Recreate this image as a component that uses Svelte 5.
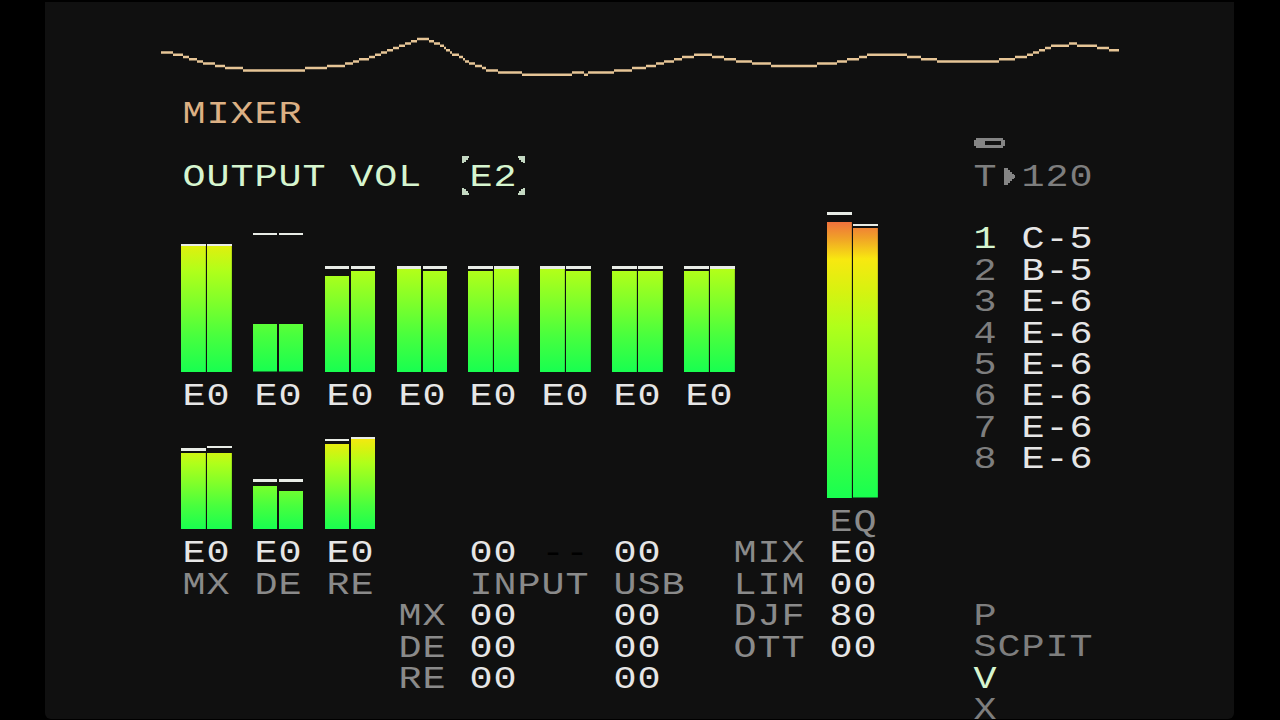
<!-- Mixer page of the tracker: scope line, track/return/master meters and the status column. -->
<script lang="ts">
    type Meter = {
        levels: [number, number];
        peaks: [number, number];
        value: string;
        name?: string;
    };

    // [end x, vertical step] for every horizontal run of the scope line
    const scopeStart = 161;
    const scopeRuns = [
        [173, 6], [183, 7], [189, 8], [197, 9], [203, 10], [215, 11],
        [225, 12], [243, 13], [305, 14], [327, 13], [345, 12], [353, 11],
        [359, 10], [369, 9], [375, 8], [381, 7], [387, 6], [393, 5],
        [399, 4], [405, 3], [411, 2], [417, 1], [429, 0], [434, 1],
        [440, 2], [444, 3], [446, 4], [450, 5], [452, 6], [459, 7],
        [463, 8], [465, 9], [469, 10], [475, 11], [482, 12], [486, 13],
        [498, 14], [522, 15], [572, 16], [584, 15], [588, 16], [614, 15],
        [632, 14], [646, 13], [656, 12], [664, 11], [674, 10], [682, 9],
        [694, 8], [712, 7], [724, 8], [736, 9], [752, 10], [771, 11],
        [817, 12], [837, 11], [847, 10], [859, 9], [867, 8], [907, 7],
        [921, 8], [937, 9], [999, 10], [1015, 9], [1027, 8], [1033, 7],
        [1039, 6], [1045, 5], [1051, 4], [1069, 3], [1077, 2], [1097, 3],
        [1109, 4], [1119, 5],
    ];

    const scopePath = scopeRuns
        .map(([end, step], i) => {
            const from = i === 0 ? scopeStart : scopeRuns[i - 1][0];
            return `M${from - scopeStart} ${(2 + step * 2.24).toFixed(1)}H${end - scopeStart}`;
        })
        .join("");

    const tracks: Meter[] = [
        { levels: [126, 126], peaks: [125.5, 125.5], value: "E0" },
        { levels: [47.5, 47.5], peaks: [136.5, 136.5], value: "E0" },
        { levels: [96, 101], peaks: [103, 103], value: "E0" },
        { levels: [104, 101], peaks: [103, 103], value: "E0" },
        { levels: [101, 104], peaks: [103, 103], value: "E0" },
        { levels: [104, 101], peaks: [103, 103], value: "E0" },
        { levels: [101, 101], peaks: [103, 103], value: "E0" },
        { levels: [101, 104], peaks: [103, 103], value: "E0" },
    ];

    const returns: Meter[] = [
        { levels: [76.5, 76.5], peaks: [78.5, 81], value: "E0", name: "MX" },
        { levels: [43, 38.5], peaks: [47.5, 47.5], value: "E0", name: "DE" },
        { levels: [85.5, 91], peaks: [88, 90], value: "E0", name: "RE" },
    ];

    const master: Meter = { levels: [276, 269.5], peaks: [283, 271.5], value: "EQ" };

    const sends = ["MX", "DE", "RE"];

    const masterParams = [
        ["MIX", "E0"],
        ["LIM", "00"],
        ["DJF", "80"],
        ["OTT", "00"],
    ];

    const notes = ["C-5", "B-5", "E-6", "E-6", "E-6", "E-6", "E-6", "E-6"];
    const activeTrack = 0;
</script>

{#snippet bars(meter: Meter)}
    <div class="bars">
        {#each meter.levels as level, i}
            <div class="channel">
                <div class="level" style="height: {level}px"></div>
                <div class="peak" style="bottom: {meter.peaks[i]}px"></div>
            </div>
        {/each}
    </div>
{/snippet}

<div class="screen">
    <svg class="scope" width="958" height="42" viewBox="0 0 958 42">
        <path d={scopePath} fill="none" stroke="#e6c596" stroke-width="2.5" />
    </svg>

    <div class="page">
        <main class="mixer">
            <h1><span class="t">MIXER</span></h1>

            <div class="output">
                <span class="t">OUTPUT VOL</span>
                <div class="cursor">
                    <span class="t">E2</span>
                    <svg width="63" height="39" viewBox="0 0 63 39">
                        <path
                            d="M0 0H7V2H6V4H4V6H2V7H0ZM63 0H56V2H57V4H59V6H61V7H63ZM0 39H7V37H6V35H4V33H2V32H0ZM63 39H56V37H57V35H59V33H61V32H63Z"
                            fill="#c4d8c2"
                        />
                    </svg>
                </div>
            </div>

            <div class="desk">
                <div class="strips">
                    <div class="meters tracks">
                        {#each tracks as track}
                            <div class="strip">
                                {@render bars(track)}
                                <span class="t">{track.value}</span>
                            </div>
                        {/each}
                    </div>

                    <div class="lower">
                        <div class="meters returns">
                            {#each returns as ret}
                                <div class="strip">
                                    {@render bars(ret)}
                                    <span class="t">{ret.value}</span>
                                    <span class="t dim">{ret.name}</span>
                                </div>
                            {/each}
                        </div>

                        <div class="inputs">
                            <span></span>
                            <span class="t">00</span>
                            <span class="t off">--</span>
                            <span class="t">00</span>
                            <span></span>
                            <span class="t dim wide">INPUT</span>
                            <span class="t dim">USB</span>
                            {#each sends as send}
                                <span class="t dim">{send}</span>
                                <span class="t wide">00</span>
                                <span class="t">00</span>
                            {/each}
                        </div>
                    </div>
                </div>

                <div class="master">
                    <div class="master-meter">
                        {@render bars(master)}
                        <span class="t dim">{master.value}</span>
                    </div>
                    {#each masterParams as [name, value]}
                        <div class="param">
                            <span class="t dim">{name}</span>
                            <span class="t">{value}</span>
                        </div>
                    {/each}
                </div>
            </div>
        </main>

        <aside class="status">
            <div class="battery">
                <svg width="31" height="10" viewBox="0 0 31 10">
                    <path
                        d="M2 0H29V2H31V8H29V10H2V8H0V2H2ZM11 3V7H27V3Z"
                        fill="#858585"
                        fill-rule="evenodd"
                    />
                </svg>
            </div>

            <div class="tempo">
                <span class="t">T</span>
                <svg width="11" height="17" viewBox="0 0 11 17">
                    <path
                        d="M0 0H4V2H6V4H8V6H10V7H11V10H10V11H8V13H6V15H4V17H0Z"
                        fill="#858585"
                    />
                </svg>
                <span class="t">120</span>
            </div>

            <div class="notes">
                {#each notes as note, i}
                    <span class="t number" class:active={i === activeTrack}>{i + 1}</span>
                    <span class="t">{note}</span>
                {/each}
            </div>

            <div class="map">
                <span class="t">P</span>
                <span class="t">SCPIT</span>
                <span class="t active">V</span>
                <span class="t">X</span>
            </div>
        </aside>
    </div>
</div>

<style>
    :global(body) {
        background: #000;
        overflow: hidden;
    }

    /* One character cell is --cw by --rh. */
    .screen {
        --cw: 23.97px;
        --rh: 31.4px;
        box-sizing: border-box;
        height: 717px;
        margin: 2px 46px 1px 45px;
        padding: 35px 0 0 116px;
        overflow: hidden;
        background: #101010;
        border-radius: 0 0 6px 6px;
        color: #e6e6e6;
        font-family: "Liberation Mono", monospace;
        font-size: 32px;
        line-height: var(--rh);
    }

    .scope {
        display: block;
    }

    .page {
        display: flex;
        width: 1000px;
        margin: 18.8px 0 0 19.8px;
    }

    .t {
        display: block;
        width: max-content;
        height: var(--rh);
        letter-spacing: 0.77px;
        transform: translate(1.6px, 1.2px) scaleX(1.2);
        transform-origin: 0 50%;
        white-space: pre;
    }

    .dim {
        color: #8a8a8a;
    }

    .off {
        color: #000;
    }

    .mixer {
        flex: none;
        width: calc(33 * var(--cw));
    }

    h1 {
        margin: 0 0 var(--rh);
        color: #dcb084;
        font: inherit;
    }

    .output {
        display: grid;
        grid-template-columns: calc(12 * var(--cw)) auto;
        justify-content: start;
        color: #d6f5cf;
    }

    .cursor {
        position: relative;
    }

    .cursor svg {
        position: absolute;
        top: -4.5px;
        left: -6.5px;
    }

    .desk {
        display: flex;
    }

    .strips {
        flex: none;
        width: calc(23 * var(--cw));
    }

    .meters {
        display: flex;
    }

    .strip {
        flex: none;
        width: calc(3 * var(--cw));
    }

    .bars {
        display: flex;
        gap: 1.3px;
        width: 50.7px;
        height: var(--full);
        margin-bottom: 8px;
    }

    .tracks {
        --full: 180px;
    }

    .returns {
        --full: 118px;
        flex: none;
        align-self: flex-start;
        width: calc(9 * var(--cw));
    }

    .channel {
        position: relative;
        display: flex;
        flex: 1;
        align-items: flex-end;
    }

    .level {
        width: 100%;
        background: linear-gradient(
                to top,
                #18ff50 0%,
                #48ff3e 20%,
                #80ff2a 39%,
                #b0ff1a 56%,
                #d8f210 68%,
                #f8e810 78%,
                #f0a028 85%,
                #f06a40 91%,
                #f04848 100%
            )
            bottom / 100% var(--full) no-repeat;
    }

    .peak {
        position: absolute;
        left: 0;
        width: 100%;
        height: 2.5px;
        background: #e8ece6;
    }

    .lower {
        display: flex;
        align-items: flex-end;
        height: 283px;
    }

    .inputs {
        display: grid;
        grid-template-columns: repeat(4, calc(3 * var(--cw)));
        grid-auto-rows: var(--rh);
    }

    .wide {
        grid-column: span 2;
    }

    .master-meter {
        --full: 306px;
        margin-left: calc(4 * var(--cw));
    }

    .master-meter .bars {
        margin-left: -1px;
    }

    .param {
        display: grid;
        grid-template-columns: calc(4 * var(--cw)) auto;
    }

    .status {
        flex: none;
        color: #7e7e7e;
    }

    .battery {
        height: var(--rh);
        margin: var(--rh) 0 0 2px;
    }

    .battery svg {
        display: block;
        padding-top: 9px;
    }

    .tempo {
        display: flex;
        align-items: center;
        margin-bottom: var(--rh);
    }

    .tempo svg {
        margin: 0 4.5px 0 12.5px;
    }

    .notes {
        display: grid;
        grid-template-columns: calc(2 * var(--cw)) auto;
        grid-auto-rows: var(--rh);
        margin-bottom: calc(4 * var(--rh));
        color: #e6e6e6;
    }

    .number {
        color: #7e7e7e;
    }

    .active {
        color: #d6f5cf;
    }
</style>
